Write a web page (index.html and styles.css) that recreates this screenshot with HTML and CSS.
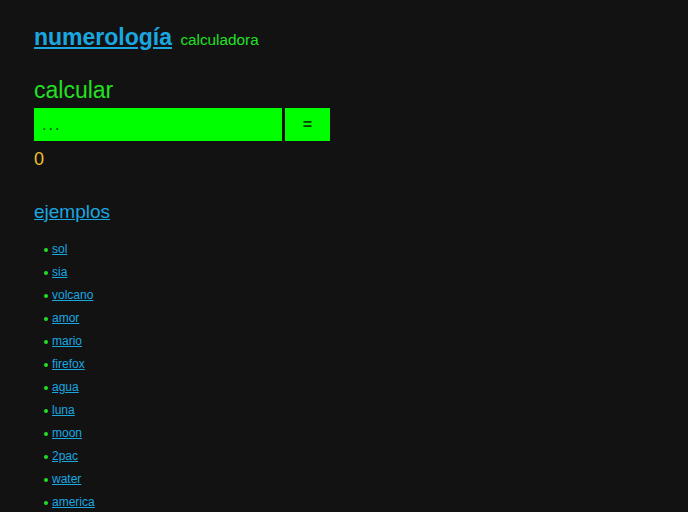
FILE: index.html
```html
<!DOCTYPE html>
<html lang="es">
<head>
<meta charset="utf-8">
<title>numerología calculadora</title>
<link rel="stylesheet" href="styles.css">
</head>
<body>
<main class="page">
  <header class="header">
    <h1 class="title"><a href="#" class="title-link">numerología</a> <span class="subtitle">calculadora</span></h1>
  </header>
  <section class="calc">
    <h2 class="calc-title">calcular</h2>
    <form class="calc-form">
      <input class="calc-input" type="text" placeholder="...">
      <button class="calc-button" type="button">=</button>
    </form>
    <div class="calc-result">0</div>
  </section>
  <section class="examples">
    <h2 class="examples-title"><a href="#" class="link">ejemplos</a></h2>
    <ul class="examples-list">
      <li class="example"><a href="#" class="link">sol</a></li>
      <li class="example"><a href="#" class="link">sia</a></li>
      <li class="example"><a href="#" class="link">volcano</a></li>
      <li class="example"><a href="#" class="link">amor</a></li>
      <li class="example"><a href="#" class="link">mario</a></li>
      <li class="example"><a href="#" class="link">firefox</a></li>
      <li class="example"><a href="#" class="link">agua</a></li>
      <li class="example"><a href="#" class="link">luna</a></li>
      <li class="example"><a href="#" class="link">moon</a></li>
      <li class="example"><a href="#" class="link">2pac</a></li>
      <li class="example"><a href="#" class="link">water</a></li>
      <li class="example"><a href="#" class="link">america</a></li>
    </ul>
  </section>
</main>
</body>
</html>
```
FILE: styles.css
```css
html, body {
  margin: 0;
  padding: 0;
  background: #121212;
}
body {
  font-family: "Liberation Sans", Arial, sans-serif;
  color: #22e022;
}
.page {
  padding: 22px 34px;
}
.title {
  margin: 0;
  font-size: 23px;
  line-height: 30px;
  font-weight: normal;
}
.title-link {
  color: #1aa7e0;
  font-weight: bold;
}
.subtitle {
  font-size: 15.3px;
  margin-left: 2px;
  color: #22e022;
}
.calc {
  margin-top: 22px;
}
.calc-title {
  margin: 0;
  font-size: 23px;
  font-weight: normal;
  line-height: 26px;
}
.calc-form {
  display: flex;
  gap: 3px;
  margin: 5px 0 0;
}
.calc-input {
  width: 248px;
  height: 33px;
  box-sizing: border-box;
  border: none;
  background: #00ff00;
  padding: 0 8px;
  font-family: inherit;
  font-size: 16px;
  color: #000;
  outline: none;
}
.calc-input::placeholder {
  color: #0d4d0d;
  letter-spacing: 2px;
}
.calc-button {
  width: 45px;
  height: 33px;
  border: none;
  background: #00ff00;
  font-family: inherit;
  font-size: 16px;
  font-weight: bold;
  color: #0a400a;
  padding: 0;
}
.calc-result {
  margin-top: 7px;
  font-size: 18px;
  line-height: 22px;
  color: #f0c030;
}
.examples {
  margin-top: 30px;
}
.examples-title {
  margin: 0;
  font-size: 19px;
  font-weight: normal;
  line-height: 24px;
}
.link {
  color: #1aa7e0;
}
.examples-list {
  list-style: none;
  margin: 14px 0 0;
  padding-left: 10px;
  font-size: 12px;
  line-height: 23px;
}
.example {
  display: flex;
  align-items: center;
  gap: 4px;
}
.example::before {
  content: "";
  width: 4px;
  height: 4px;
  border-radius: 50%;
  background: #22e022;
  margin-top: 1px;
}
```
